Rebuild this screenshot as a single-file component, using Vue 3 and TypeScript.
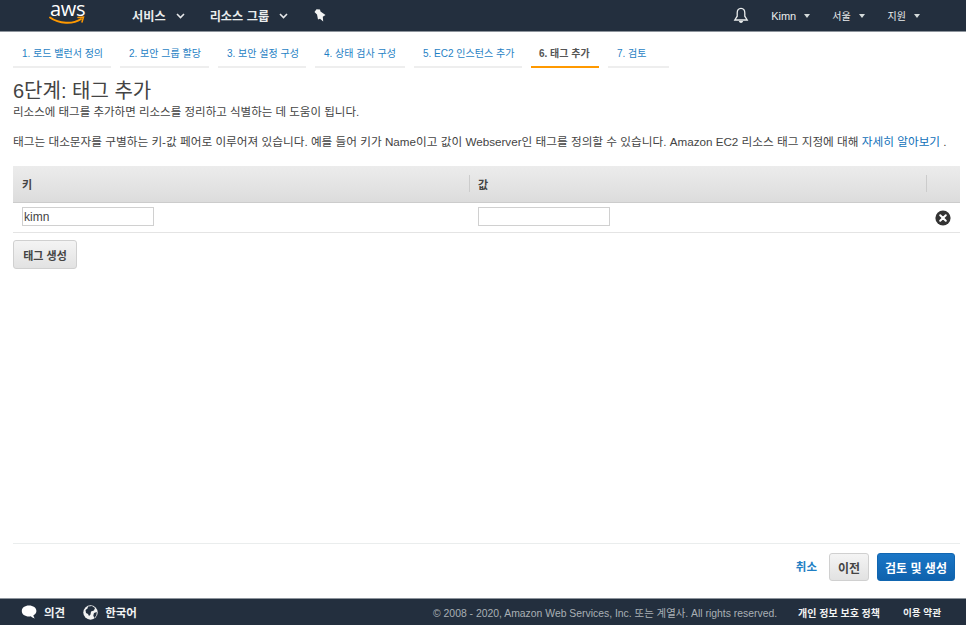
<script setup lang="ts">
const steps: { label: string; width: number; active?: boolean }[] = [
  { label: '1. 로드 밸런서 정의', width: 98 },
  { label: '2. 보안 그룹 할당', width: 89 },
  { label: '3. 보안 설정 구성', width: 88 },
  { label: '4. 상태 검사 구성', width: 90 },
  { label: '5. EC2 인스턴스 추가', width: 108 },
  { label: '6. 태그 추가', width: 68, active: true },
  { label: '7. 검토', width: 61 },
]
</script>

<template>
  <div class="page">
    <header class="nav">
      <div class="logo">
        <span class="logo-text">aws</span>
        <svg class="logo-smile" width="36" height="9" viewBox="0 0 36 9">
          <path d="M1 1.500C10 8 24 8.500 32 3" fill="none" stroke="#f90" stroke-width="1.900" stroke-linecap="round" />
          <path d="M29 1.500L34.500 1L33 6" fill="none" stroke="#f90" stroke-width="1.500" stroke-linecap="round" />
        </svg>
      </div>
      <span class="nav-item bold first">서비스<svg class="chev" width="9" height="6" viewBox="0 0 9 6"><path d="M1 1l3.500 3.500L8 1" fill="none" stroke="#e6e8ea" stroke-width="1.600" /></svg></span>
      <span class="nav-item bold second">리소스 그룹<svg class="chev" width="9" height="6" viewBox="0 0 9 6"><path d="M1 1l3.500 3.500L8 1" fill="none" stroke="#e6e8ea" stroke-width="1.600" /></svg></span>
      <svg class="pin" width="12" height="13" viewBox="0 0 12 13">
        <path d="M2.500 0.300L6 0.500L6.500 2.500L11.500 6L8.800 7.800L9.200 12.600L6 9.800L4 10.500L3 5.500L0.500 3Z" fill="#f2f3f3" />
      </svg>
      <div class="spacer"></div>
      <svg class="bell" width="16" height="17" viewBox="0 0 16 17">
        <path d="M8 1.400C5.400 1.400 4.200 3.400 4.200 6v3.200L1.800 13h12.400L11.800 9.200V6c0-2.600-1.200-4.600-3.800-4.600Z" fill="none" stroke="#eaeded" stroke-width="1.300" />
        <path d="M5.800 14c.4 1.300 1.200 2 2.200 2s1.800-.7 2.200-2Z" fill="#eaeded" />
      </svg>
      <span class="nav-item user">Kimn<i class="caret"></i></span>
      <span class="nav-item region">서울<i class="caret"></i></span>
      <span class="nav-item support">지원<i class="caret"></i></span>
    </header>

    <main class="main">
      <nav class="steps">
        <a v-for="s in steps" :key="s.label" class="step" :class="{ active: s.active }" :style="{ width: s.width + 'px' }">{{ s.label }}</a>
      </nav>

      <h1 class="title">6단계: 태그 추가</h1>
      <p class="sub">리소스에 태그를 추가하면 리소스를 정리하고 식별하는 데 도움이 됩니다.</p>
      <p class="desc">태그는 대소문자를 구별하는 키-값 페어로 이루어져 있습니다. 예를 들어 키가 Name이고 값이 Webserver인 태그를 정의할 수 있습니다. Amazon EC2 리소스 태그 지정에 대해 <a class="link">자세히 알아보기</a> .</p>

      <div class="table">
        <div class="thead">
          <div class="th key">키</div>
          <div class="th val">값</div>
          <div class="th act"></div>
        </div>
        <div class="trow">
          <div class="td key"><input class="input" value="kimn" /></div>
          <div class="td val"><input class="input" value="" /></div>
          <div class="td act">
            <svg width="16" height="16" viewBox="0 0 16 16">
              <circle cx="8" cy="8" r="7.600" fill="#333" />
              <path d="M5.200 5.200l5.600 5.600M10.800 5.200l-5.600 5.600" stroke="#fff" stroke-width="2" stroke-linecap="round" />
            </svg>
          </div>
        </div>
      </div>

      <button class="btn add" type="button">태그 생성</button>

      <div class="actions">
        <a class="cancel">취소</a>
        <button class="btn prev" type="button">이전</button>
        <button class="btn primary" type="button">검토 및 생성</button>
      </div>
    </main>

    <footer class="footer">
      <svg class="fb-icon" width="16" height="14" viewBox="0 0 16 14">
        <path d="M8 0.500C3.800 0.500 0.800 2.800 0.800 6s3 5.500 7.200 5.500c.7 0 1.300-.1 1.900-.2.800 1 2.100 1.900 3.900 2.200-.8-.8-1.300-1.900-1.400-3.200 1.900-1 3-2.600 3-4.300C15.400 2.800 12.200 0.500 8 0.500Z" fill="#fff" />
      </svg>
      <span class="f-strong fb">의견</span>
      <svg class="globe" width="15" height="15" viewBox="0 0 15 15">
        <circle cx="7.500" cy="7.500" r="7.200" fill="#f2f3f3" />
        <path d="M5 1.500l4-.5 3 2-1 2.500-3 1-.5 3-1.500 1.500-1-2-2-1-.5-3 2-1.500Z M11 8l2.800-1-.5 3.500-2 2.500-1-2.500Z" fill="#232f3e" />
      </svg>
      <span class="f-strong lang">한국어</span>
      <div class="spacer"></div>
      <span class="copy">© 2008 - 2020, Amazon Web Services, Inc. 또는 계열사. All rights reserved.</span>
      <span class="f-strong privacy">개인 정보 보호 정책</span>
      <span class="f-strong terms">이용 약관</span>
    </footer>
  </div>
</template>

<style>
html, body { margin: 0; background: #fff; }
</style>

<style scoped>
.page {
  height: 625px;
  width: 966px;
  display: flex;
  flex-direction: column;
  overflow: hidden;
  font-family: "Liberation Sans", "Noto Sans CJK KR", sans-serif;
  color: #444;
}
.nav {
  height: 32px;
  box-sizing: border-box;
  flex: none;
  background: #232f3e;
  border-bottom: 1px solid #8d949c;
  display: flex;
  align-items: center;
  color: #eaeded;
  font-size: 10px;
}
.logo {
  margin-left: 49px;
  width: 36px;
  height: 31px;
  position: relative;
}
.logo-text {
  position: absolute;
  left: 1px;
  top: 0;
  color: #fff;
  font: 400 20px/18px "Open Sans", sans-serif;
  letter-spacing: -0.300px;
}
.logo-smile { position: absolute; left: 0; top: 15.500px; }
.nav-item { display: inline-flex; align-items: center; white-space: nowrap; }
.bold { font-weight: 700; font-size: 12.200px; }
.first { margin-left: 47px; }
.second { margin-left: 25px; }
.chev { margin-left: 10px; }
.pin { margin-left: 26px; }
.spacer { flex: 1; }
.bell { margin-right: 22px; }
.caret {
  width: 0;
  height: 0;
  margin-left: 8px;
  border-left: 3.500px solid transparent;
  border-right: 3.500px solid transparent;
  border-top: 4px solid #d5dbdb;
}
.user { margin-right: 22px; font-size: 11px; }
.region { margin-right: 23px; }
.support { margin-right: 46px; }
.main {
  flex: 1;
  min-height: 0;
  display: flex;
  flex-direction: column;
  padding: 0 6px 0 13px;
}
.steps { display: flex; gap: 9px; margin-top: 12px; }
.step {
  box-sizing: border-box;
  height: 24px;
  padding: 2px 0 0 9px;
  border-bottom: 2px solid #eee;
  color: #1f7fc4;
  font-size: 10px;
  line-height: 16px;
  white-space: nowrap;
}
.step.active { padding-left: 8px; color: #555; font-weight: 700; border-bottom-color: #f90; }
.title {
  margin: 11px 0 0;
  font-size: 20px;
  line-height: 24px;
  font-weight: 400;
  color: #444;
}
.sub { margin: 2px 0 0; font-size: 11.500px; line-height: 14px; color: #444; }
.desc {
  margin: 15px 0 0;
  font-size: 11.660px;
  line-height: 16px;
  color: #444;
  white-space: nowrap;
}
.link { color: #0f6fb8; }
.table { margin-top: 16px; }
.thead {
  display: flex;
  height: 37px;
  box-sizing: border-box;
  background: linear-gradient(#ececec, #dcdcdc);
  border-bottom: 1px solid #ccc;
}
.th {
  display: flex;
  align-items: center;
  font-size: 11px;
  font-weight: 700;
  color: #444;
  position: relative;
}
.key { width: 456px; box-sizing: border-box; padding-left: 9px; }
.val { width: 457px; box-sizing: border-box; padding-left: 9px; }
.act { width: 34px; box-sizing: border-box; }
.th.val::before, .th.act::before {
  content: "";
  position: absolute;
  left: 0;
  top: 9px;
  height: 17px;
  border-left: 1px solid #ccc;
}
.trow {
  display: flex;
  height: 30px;
  box-sizing: border-box;
  border-bottom: 1px solid #e4e4e4;
}
.td { display: flex; align-items: flex-start; padding-top: 4px; box-sizing: border-box; }
.td.act { padding-left: 9px; padding-top: 7px; }
.input {
  width: 132px;
  height: 19px;
  box-sizing: border-box;
  border: 1px solid #d0d0d0;
  padding: 0 1px;
  font: 12px "Liberation Sans", sans-serif;
  color: #444;
  outline: none;
  border-radius: 0;
}
.btn {
  box-sizing: border-box;
  border: 1px solid #d0d0d0;
  border-radius: 3px;
  background: linear-gradient(#f4f4f4, #e2e2e2);
  color: #444;
  font-family: inherit;
  font-size: 11px;
  font-weight: 700;
  padding: 0;
}
.add { align-self: flex-start; margin-top: 7px; width: 64px; height: 29px; }
.actions {
  margin-top: auto;
  height: 55px;
  box-sizing: border-box;
  border-top: 1px solid #eaeded;
  display: flex;
  align-items: flex-start;
  justify-content: flex-end;
  padding: 9px 5px 0 0;
}
.cancel { font-size: 11.500px; font-weight: 700; color: #1f7fc4; line-height: 28px; margin-right: 12px; }
.prev { width: 40px; height: 28px; margin-right: 8px; font-size: 12px; }
.primary {
  width: 78px;
  height: 28px;
  border-color: #1166b1;
  background: linear-gradient(#1a76c6, #0f62ad);
  color: #fff;
  font-size: 12px;
}
.footer {
  flex: none;
  height: 27px;
  box-sizing: border-box;
  background: #232f3e;
  border-top: 1px solid #8d949c;
  display: flex;
  align-items: center;
  color: #eaeded;
  font-size: 11.500px;
}
.fb-icon { margin-left: 21px; }
.f-strong { font-weight: 700; color: #f2f3f3; white-space: nowrap; }
.fb { margin-left: 7px; }
.globe { margin-left: 18px; }
.lang { margin-left: 7px; font-size: 11.500px; }
.copy { color: #a9afb5; white-space: nowrap; font-size: 10.400px; }
.privacy { margin-left: 21px; font-size: 10px; }
.terms { margin-left: 23px; margin-right: 25px; font-size: 9.600px; }
</style>
